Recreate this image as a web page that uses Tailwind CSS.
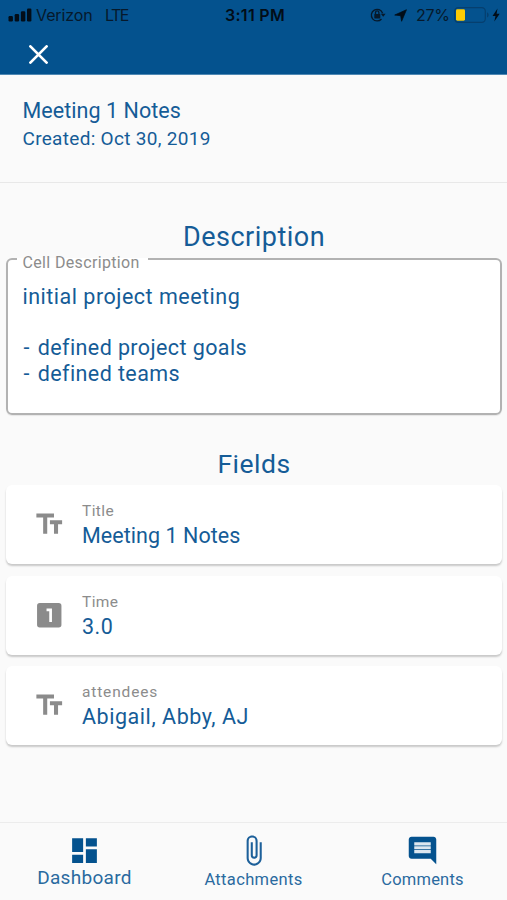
<!DOCTYPE html>
<html lang="en">
<head>
<meta charset="utf-8">
<meta name="viewport" content="width=device-width, initial-scale=1">
<title>Meeting 1 Notes</title>
<script src="https://cdn.jsdelivr.net/npm/@tailwindcss/browser@4"></script>
</head>
<body class="bg-[#fafafa]">
<div class="flex h-[900px] w-[507px] flex-col overflow-hidden bg-[#fafafa] font-[Roboto,sans-serif] text-[#155c97] whitespace-nowrap">
  <header class="h-[75px] shrink-0 border-b border-[#4f88b3] bg-[#04528e]">
    <div class="grid h-[30px] grid-cols-[1fr_auto_1fr] items-center pl-2 pr-[5px] font-[Inter,sans-serif] text-[16px] text-[#06192b]">
      <div class="flex items-center">
        <svg class="h-[14px] w-[24px]" viewBox="0 0 24 14" fill="#020d18"><rect x="0.5" y="8" width="4.4" height="5.5" rx="1.2"/><rect x="6.7" y="6" width="4.4" height="7.5" rx="1.2"/><rect x="12.9" y="3.3" width="4.4" height="10.2" rx="1.2"/><rect x="19" y="0.6" width="4.4" height="12.9" rx="1.2"/></svg>
        <span class="ml-1 w-[57px] tracking-[-0.1px]">Verizon</span>
        <span class="ml-3 tracking-[-1.5px]">LTE</span>
      </div>
      <span class="text-[16px] font-semibold tracking-[0.3px] text-[#020d18]">3:11 PM</span>
      <div class="flex items-center justify-end">
        <svg class="h-4 w-4" viewBox="0 0 16 16" fill="none" stroke="#06192b" stroke-width="1.3"><path d="M12.600 6.200A5.800 5.800 0 1 0 11.500 12"/><path d="M10.800 6.700h4.800l-2.400 3z" fill="#06192b" stroke="none"/><rect x="4.300" y="7" width="6" height="4.400" rx=".6" fill="#06192b" stroke="none"/><path d="M5.500 7V5.600a1.700 1.700 0 0 1 3.400 0V7"/></svg>
        <svg class="ml-2 h-[13px] w-[13px]" viewBox="0 0 14 14" fill="#020d18"><path d="M13.400.8 8.200 13.200 7.200 7.200.8 6.500z" stroke="#020d18" stroke-width=".8"/></svg>
        <span class="ml-[9px] w-[32px] tracking-[-0.3px]">27%</span>
        <svg class="ml-1.5 h-4 w-[36px]" viewBox="0 0 36 16"><rect x=".7" y=".7" width="30.600" height="14.600" rx="3.600" fill="none" stroke="#063f6e" stroke-width="1.200"/><rect x="2" y="2.300" width="9" height="11.400" rx="1.400" fill="#fdcc05"/><path d="M33 5.600c2.200.6 2.200 4.200 0 4.800z" fill="#063f6e"/></svg>
        <svg class="ml-0.5 mr-0.5 h-[14px] w-2" viewBox="0 0 8 14" fill="#020d18"><path d="M5.500.5.5 8h3L2.300 13.500 7.700 5.700H4.600z"/></svg>
      </div>
    </div>
    <div class="pl-[29px] pt-[15px]">
      <svg class="h-[19px] w-[19px]" viewBox="0 0 19 19" stroke="#fff" stroke-width="2.700" stroke-linecap="round"><path d="m1.400 1.400 16.200 16.200M17.600 1.400 1.400 17.600"/></svg>
    </div>
  </header>

  <section class="h-[108px] shrink-0 border-b border-[#e8e8e8] pl-[22.500px] pt-[22px]">
    <h1 class="text-[21.500px] leading-[28px] tracking-[0.050px]">Meeting 1 Notes</h1>
    <p class="text-[19px] leading-[28px] tracking-[0.300px]">Created: Oct 30, 2019</p>
  </section>

  <main class="grow pl-1.5 pr-[5px]">
    <h2 class="pt-[37px] text-center text-[27px] leading-[34px] tracking-[0.500px]">Description</h2>
    <fieldset class="-mt-[4px] h-[165px] rounded-[6px] border-2 border-[#b2b2b2] bg-white pl-[9px] shadow-[0_1px_1px_rgba(0,0,0,0.08)]">
      <legend class="h-[17px] w-[131px] pl-[5.500px] text-[16px] leading-[17px] tracking-[0.350px] text-[#8c8c8c]"><span class="relative top-[4px]">Cell Description</span></legend>
      <div class="pl-[5.500px] pt-[17px] text-[21.500px] leading-[25.700px] tracking-[0.400px]">
        <p class="tracking-[0.500px]">initial project meeting</p>
        <p>&nbsp;</p>
        <p><span class="inline-block w-[15px] pl-px">-</span> <span class="-ml-[5.500px]">defined project goals</span></p>
        <p><span class="inline-block w-[15px] pl-px">-</span> <span class="-ml-[5.500px]">defined teams</span></p>
      </div>
    </fieldset>
    <h2 class="pt-[32px] text-center text-[26.500px] leading-[34px] tracking-[0.500px]">Fields</h2>
    <div class="mt-[4px] flex flex-col gap-[11.500px]">
      <div class="flex h-[79px] items-center rounded-[6px] bg-white pl-[27px] shadow-[0_2px_2px_rgba(0,0,0,0.2)]">
        <svg class="h-[32.500px] w-[32.500px]" viewBox="0 0 24 24" fill="#8b8b8b"><path d="M2.500 4v3h5v12h3V7h5V4h-13zm19 5h-9v3h3v7h3v-7h3V9z"/></svg>
        <div class="pl-[16.500px]">
          <div class="text-[15.500px] leading-[22px] tracking-[0.400px] text-[#8c8c8c]">Title</div>
          <div class="text-[21.500px] leading-[27px] tracking-[0.050px]">Meeting 1 Notes</div>
        </div>
      </div>
      <div class="flex h-[79px] items-center rounded-[6px] bg-white pl-[27px] shadow-[0_2px_2px_rgba(0,0,0,0.2)]">
        <svg class="h-[32.500px] w-[32.500px]" viewBox="0 0 24 24" fill="#8b8b8b"><path d="M19 3H5a2 2 0 0 0-2 2v14a2 2 0 0 0 2 2h14a2 2 0 0 0 2-2V5a2 2 0 0 0-2-2zm-5 14h-2V9h-2V7h4v10z"/></svg>
        <div class="pl-[16.500px]">
          <div class="text-[15.500px] leading-[22px] tracking-[0.400px] text-[#8c8c8c]">Time</div>
          <div class="text-[21.500px] leading-[27px] tracking-[0.500px]">3.0</div>
        </div>
      </div>
      <div class="flex h-[79px] items-center rounded-[6px] bg-white pl-[27px] shadow-[0_2px_2px_rgba(0,0,0,0.2)]">
        <svg class="h-[32.500px] w-[32.500px]" viewBox="0 0 24 24" fill="#8b8b8b"><path d="M2.500 4v3h5v12h3V7h5V4h-13zm19 5h-9v3h3v7h3v-7h3V9z"/></svg>
        <div class="pl-[16.500px]">
          <div class="text-[15.500px] leading-[22px] tracking-[0.850px] text-[#8c8c8c]">attendees</div>
          <div class="text-[21.500px] leading-[27px] tracking-[0.550px]">Abigail, Abby, AJ</div>
        </div>
      </div>
    </div>
  </main>

  <nav class="grid h-[78px] shrink-0 grid-cols-3 border-t border-[#ececec] text-[#2a6a9f]">
    <div class="flex flex-col items-center pt-[11px]">
      <svg class="h-[33px] w-[33px]" viewBox="0 0 24 24" fill="#04528e"><path d="M3 13h8V3H3v10zm0 8h8v-6H3v6zm10 0h8V11h-8v10zm0-18v6h8V3h-8z"/></svg>
      <span class="text-[19px] leading-[22px] tracking-[0.300px]">Dashboard</span>
    </div>
    <div class="flex flex-col items-center pt-[11px]">
      <svg class="h-[33px] w-[33px]" viewBox="0 0 24 24" fill="#1d609a"><path d="M16.500 6v11.500c0 2.210-1.790 4-4 4s-4-1.790-4-4V5a2.500 2.500 0 0 1 5 0v10.500c0 .55-.45 1-1 1s-1-.45-1-1V6H10v9.500a2.500 2.500 0 0 0 5 0V5c0-2.210-1.790-4-4-4S7 2.790 7 5v12.500c0 3.040 2.460 5.500 5.500 5.500s5.500-2.460 5.500-5.500V6h-1.500z"/></svg>
      <span class="text-[16.500px] leading-[25px] tracking-[0.350px]">Attachments</span>
    </div>
    <div class="flex flex-col items-center pt-[11px]">
      <svg class="h-[33px] w-[33px]" viewBox="0 0 24 24" fill="#04528e"><path d="M22 4c0-1.100-.9-2-2-2H4c-1.100 0-2 .9-2 2v12c0 1.100.9 2 2 2h14l4 4V4z"/><path fill="#dce7f0" d="M6 6h12v2.300H6zm0 2.900h12v2.200H6zm0 2.800h12v2.300H6z"/></svg>
      <span class="text-[16.500px] leading-[25px] tracking-[0.200px]">Comments</span>
    </div>
  </nav>
</div>
</body>
</html>
